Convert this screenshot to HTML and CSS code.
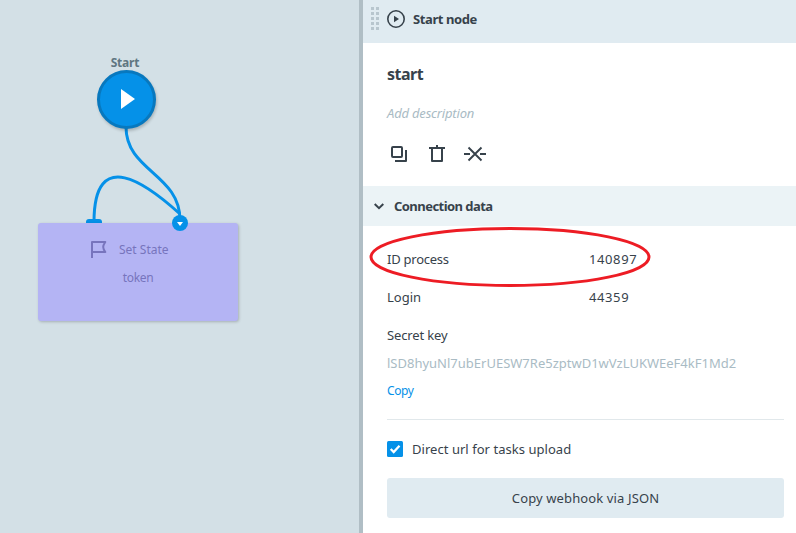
FILE: index.html
```
<!DOCTYPE html>
<html lang="en">
<head>
<meta charset="utf-8">
<title>Start node</title>
<link rel="stylesheet" href="styles.css">
</head>
<body>
<div class="app">
  <main class="canvas">
    <svg class="links" width="359" height="533" viewBox="0 0 359 533">
      <path d="M126 127C126 171 180 174 180 220"/>
      <path d="M180 214C147 184 94 145 94 222"/>
    </svg>
    <span class="node-title">Start</span>
    <div class="start-node"><svg width="14" height="20" viewBox="0 0 14 20"><path d="M0 0L14 10L0 20Z" fill="#fff"/></svg></div>
    <span class="port-out"></span>
    <div class="state-node">
      <div class="state-head">
        <svg width="17" height="18" viewBox="0 0 17 18"><path d="M1 17V1H14.3C11.5 5 11.5 7 14.3 11H1" fill="none" stroke="#7774bd" stroke-width="2" stroke-linejoin="round"/></svg>
        <span>Set State</span>
      </div>
      <div class="state-body">token</div>
    </div>
    <span class="port-in"><svg width="6" height="4" viewBox="0 0 6 4"><path d="M0 0H6L3 4Z" fill="#fff"/></svg></span>
  </main>
  <aside class="panel">
    <header class="panel-head">
      <svg class="grip" width="8" height="23" viewBox="0 0 8 23"><path d="M1.5 0V23M6.5 0V23" stroke="#b8c6ce" stroke-width="3" stroke-dasharray="3 2"/></svg>
      <svg class="play" width="18" height="18" viewBox="0 0 18 18"><circle cx="9" cy="9" r="8.2" fill="none" stroke="#37424b" stroke-width="1.6"/><path d="M7 5.8L12 9L7 12.2Z" fill="#37424b"/></svg>
      <strong>Start node</strong>
    </header>
    <section class="summary">
      <h1>start</h1>
      <p>Add description</p>
      <div class="tools">
        <svg width="18" height="18" viewBox="0 0 18 18"><g fill="none" stroke="#37424b" stroke-width="2" stroke-linejoin="round"><rect x="2" y="2" width="10" height="10" rx="1"/><path d="M16 5V16H5"/></g></svg>
        <svg width="18" height="18" viewBox="0 0 18 18"><path d="M1 3H17M9 0V3M4 4V16H14V4" fill="none" stroke="#37424b" stroke-width="2" stroke-linejoin="round"/></svg>
        <svg width="22" height="18" viewBox="0 0 22 18"><path d="M0 9H6M16 9H22M4.5 2.5L17.5 15.5M17.5 2.5L4.5 15.5" fill="none" stroke="#37424b" stroke-width="1.9"/></svg>
      </div>
    </section>
    <div class="section-bar">
      <svg width="10" height="7" viewBox="0 0 10 7"><path d="M.7 1L5 5.2L9.3 1" fill="none" stroke="#37424b" stroke-width="2"/></svg>
      <strong>Connection data</strong>
    </div>
    <section class="details">
      <div class="row"><span class="label-id">ID process</span><span class="number">140897</span></div>
      <div class="row"><span>Login</span><span class="number">44359</span></div>
      <div class="row"><span class="label-secret">Secret key</span></div>
      <div class="key">lSD8hyuNl7ubErUESW7Re5zptwD1wVzLUKWEeF4kF1Md2</div>
      <a class="copy">Copy</a>
      <label class="check">
        <svg width="16" height="16" viewBox="0 0 16 16"><rect width="16" height="16" rx="1.5" fill="#0591e8"/><path d="M3.7 8L6.7 11L12.5 4.8" fill="none" stroke="#fff" stroke-width="2.3"/></svg>
        <span>Direct url for tasks upload</span>
      </label>
      <button class="button">Copy webhook via JSON</button>
    </section>
    <svg class="highlight" width="282" height="60" viewBox="0 0 282 60"><ellipse cx="141" cy="30" rx="139" ry="28.5" fill="none" stroke="#ed1c24" stroke-width="3"/></svg>
  </aside>
</div>
</body>
</html>
```
FILE: styles.css
```
* { box-sizing: border-box; }
body { margin: 0; font: 13px/20px "Noto Sans", sans-serif; color: #37424b; }
svg { display: block; flex: none; }
h1, p { margin: 0; }
span, strong { white-space: nowrap; }
.app { display: flex; width: 796px; height: 533px; overflow: hidden; }
.canvas { position: relative; width: 359px; background: #d3e0e6; }
.links { position: absolute; left: 0; top: 0; fill: none; stroke: #0591e8; stroke-width: 3; }
.node-title { position: absolute; left: 65px; top: 53px; width: 120px; text-align: center; font-weight: 700; font-size: 12px; letter-spacing: -.2px; color: #607681; }
.start-node { position: absolute; left: 96.5px; top: 69.5px; width: 59px; height: 59px; border-radius: 50%; background: #0591e8; border: 3px solid #0878be; display: flex; align-items: center; justify-content: center; padding-left: 3px; box-shadow: 1px 2px 3px rgba(0,0,0,.2); }
.port-out { position: absolute; left: 86px; top: 219px; width: 16px; height: 4px; background: #0591e8; border-radius: 3px 3px 0 0; }
.state-node { position: absolute; left: 38px; top: 223px; width: 200px; height: 98px; border-radius: 3px; background: #b4b4f4; box-shadow: 1px 1px 3px rgba(0,0,0,.22); color: #7774bd; font-size: 12px; }
.state-head { display: flex; align-items: center; gap: 11px; padding: 17px 0 0 53px; }
.state-body { text-align: center; padding-top: 8px; letter-spacing: -.3px; }
.port-in { position: absolute; left: 172px; top: 215px; width: 16px; height: 16px; border-radius: 50%; background: #0591e8; display: flex; align-items: center; justify-content: center; padding-top: 2px; }
.panel { position: relative; width: 437px; border-left: 4px solid #b0bec5; background: #fff; }
.panel-head { height: 43px; display: flex; align-items: flex-start; padding: 7px 0 0 8px; background: #e0ebf1; }
.play { margin: 3px 8px 0 8px; }
.panel-head strong { margin-top: 2px; letter-spacing: -.4px; }
.summary { height: 143px; padding: 21px 24px 0; }
.summary h1 { font-size: 16px; line-height: 20px; letter-spacing: -.5px; }
.summary p { margin-top: 19px; color: #a9bbc4; font-style: italic; letter-spacing: -.18px; }
.tools { display: flex; margin-top: 22px; padding-left: 3px; gap: 20px; }
.tools svg:last-child { margin-left: -2px; }
.section-bar { height: 40px; display: flex; align-items: center; padding-left: 11px; gap: 10px; background: #ebf3f6; }
.section-bar strong { letter-spacing: -.55px; }
.details { padding: 14px 12px 0 24px; }
.row { display: grid; grid-template-columns: 202px 1fr; line-height: 38px; }
.label-id { letter-spacing: -.25px; }
.label-secret { letter-spacing: -.15px; }
.number { letter-spacing: .6px; }
.key { margin-top: -1px; color: #a9bbc4; }
.copy { display: block; color: #0591e8; padding: 8px 0 18px; font-size: 12px; letter-spacing: -.4px; border-bottom: 1px solid #e1e8eb; }
.check { display: flex; align-items: center; gap: 9px; height: 20px; margin-top: 19px; letter-spacing: .04px; }
.button { display: block; width: 397px; height: 40px; margin-top: 19px; padding: 0; border: 0; border-radius: 3px; background: #e0ebf1; color: inherit; font: inherit; letter-spacing: .12px; }
.highlight { position: absolute; left: 6px; top: 227px; }
```
